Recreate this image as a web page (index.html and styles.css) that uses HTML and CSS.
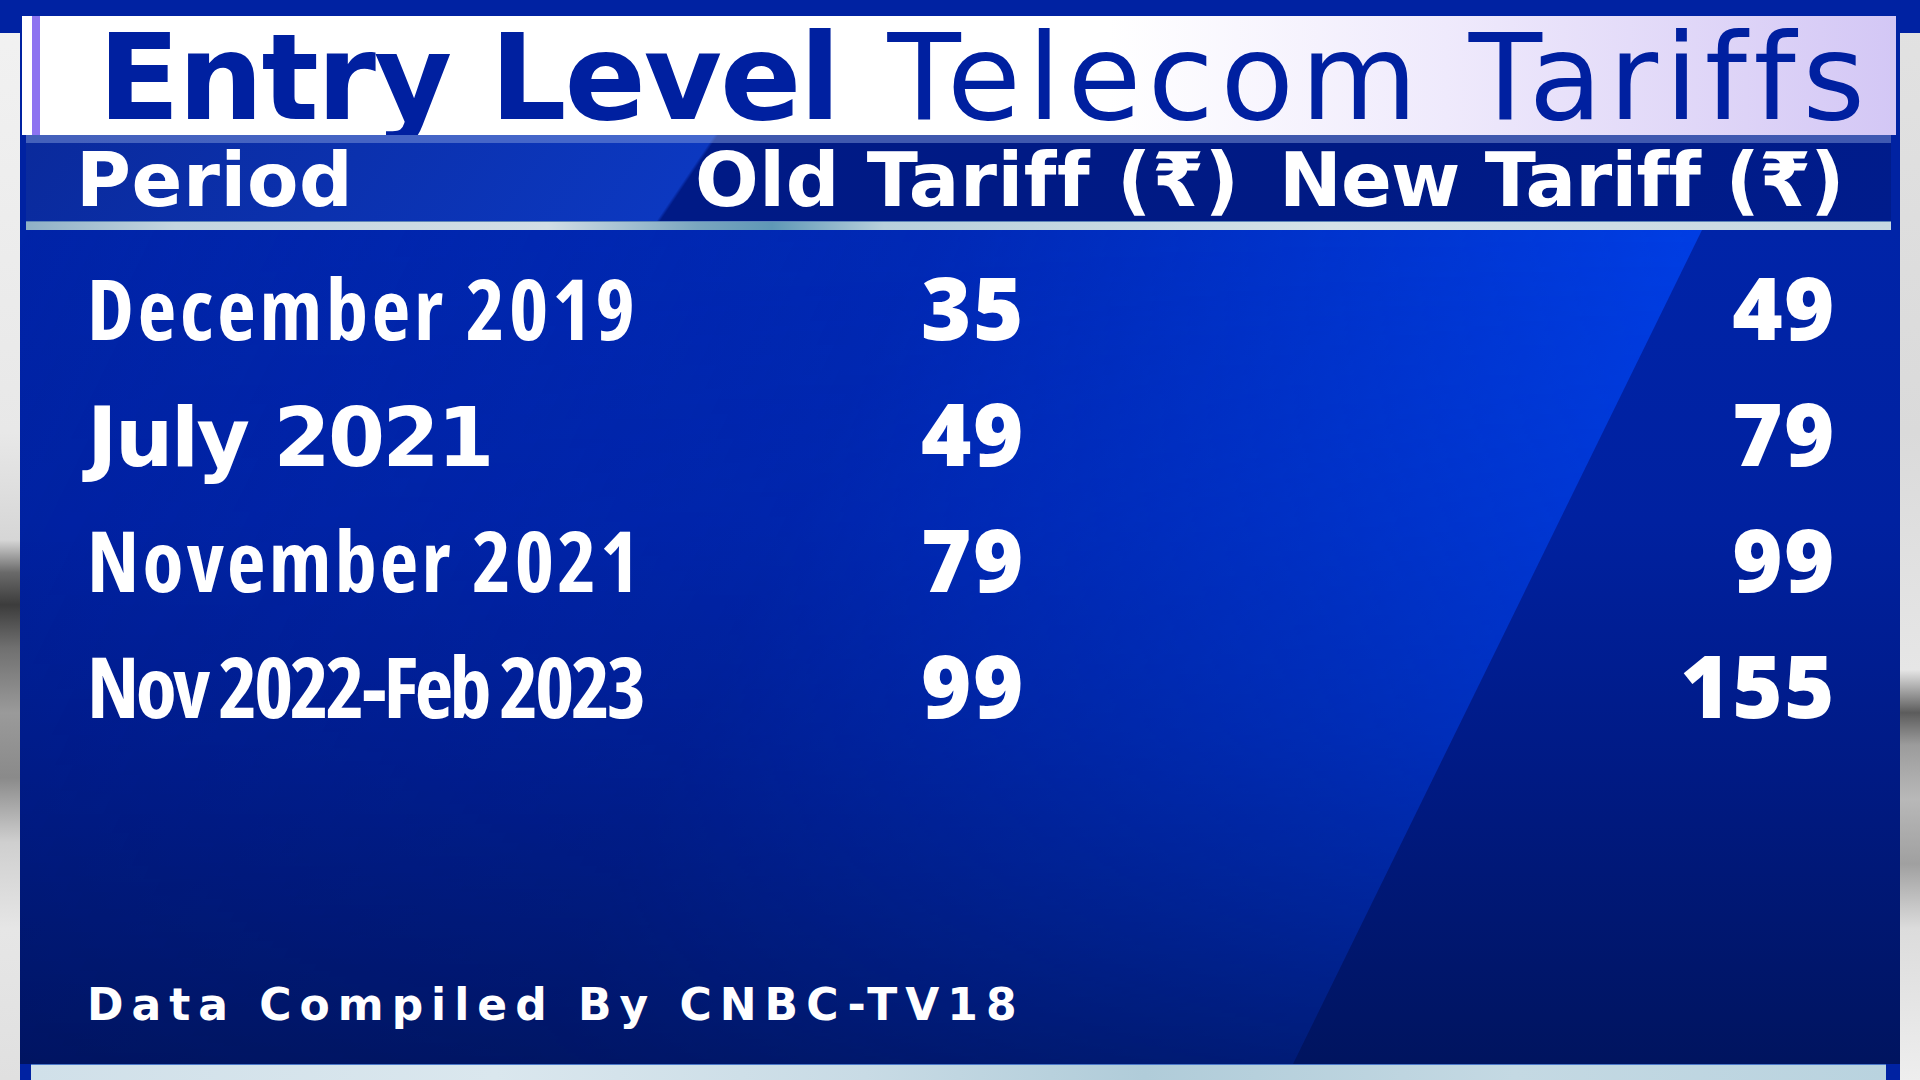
FILE: index.html
```html
<!DOCTYPE html>
<html lang="en">
<head>
<meta charset="utf-8">
<title>Entry Level Telecom Tariffs</title>
<link rel="stylesheet" href="styles.css">
</head>
<body>
  <main class="panel">
    <header class="title-box">
      <h1 class="title"><span class="title-bold">Entry Level</span><span class="title-light">Telecom Tariffs</span></h1>
    </header>
    <div class="thead">
      <div class="thead-bar">
        <span class="th">Period</span>
        <span class="th">Old Tariff (₹)</span>
        <span class="th th-new">New Tariff (₹)</span>
      </div>
      <div class="thead-bevel"></div>
    </div>
    <section class="content">
      <div class="rows">
        <div class="period loose">December 2019</div>
        <div class="num old">35</div>
        <div class="num new">49</div>

        <div class="period wide">July 2021</div>
        <div class="num old">49</div>
        <div class="num new">79</div>

        <div class="period mid">November 2021</div>
        <div class="num old">79</div>
        <div class="num new">99</div>

        <div class="period tight">Nov 2022-Feb 2023</div>
        <div class="num old">99</div>
        <div class="num new">155</div>
      </div>
      <footer class="source">Data Compiled By CNBC-TV18</footer>
    </section>
    <div class="base-strip"></div>
  </main>
</body>
</html>
```
FILE: styles.css
```css
* { box-sizing: border-box; }
html, body { margin: 0; padding: 0; }
body {
  width: 1920px;
  height: 1080px;
  overflow: hidden;
  background:
    linear-gradient(#0022a2, #0022a2) left top / 100% 33px no-repeat,
    linear-gradient(180deg, #f2f2f2 0%, #e8e8e8 40%, #d6d6d6 50%, #6a6a6a 53%, #3c3c3c 56%, #707070 60%, #9a9a9a 66%, #8a8a8a 72%, #cfcfcf 78%, #e6e6e6 86%, #e0e0e0 100%) left top / 20px 100% no-repeat,
    linear-gradient(180deg, #e2e2e2 0%, #dadada 40%, #e6e6e6 62%, #5c5c5c 66%, #9c9c9c 69%, #b8b8b8 74%, #a0a0a0 80%, #dcdcdc 86%, #eeeeee 100%) right top / 20px 100% no-repeat,
    #e0e0e0;
}

.panel {
  width: 1880px;
  height: 1080px;
  margin-left: 20px;
  padding-top: 16px;
  display: flex;
  flex-direction: column;
  background: #0022a2;
}

/* Title */
.title-box {
  height: 119px;
  margin: 0 4px 0 2px;
  padding: 4px 0 0 76px;
  background: linear-gradient(90deg, #ffffff 0%, #ffffff 58%, #efeafc 76%, #ddd3f7 92%, #d3c7f5 100%);
  box-shadow: inset 10px 0 0 #ffffff, inset 18px 0 0 #8c73f0;
}
.title {
  margin: 0;
  display: flex;
  align-items: baseline;
  gap: 49px;
  color: #0020a0;
  white-space: nowrap;
  line-height: 116px;
  height: 116px;
}
.title-bold {
  font: 700 120px/116px "DejaVu Sans", sans-serif;
  letter-spacing: -2px;
}
.title-light {
  font: 400 120px/116px "DejaVu Sans", sans-serif;
  letter-spacing: 6.6px;
}

/* Table header */
.thead { margin: 0 9px 0 6px; }
.thead-bar {
  height: 86px;
  padding: 6px 0 0 50px;
  display: grid;
  grid-template-columns: 619px 584px auto;
  font: 700 75px/79px "DejaVu Sans", sans-serif;
  letter-spacing: 0.6px;
  color: #ffffff;
  white-space: nowrap;
  background: linear-gradient(124deg, #0a2a9c 0%, #0c38c0 35.8%, #001a86 36%, #001a84 70%, #001c8c 100%);
  box-shadow: inset 0 8px 0 rgba(140, 165, 225, 0.45);
}
.th-new { letter-spacing: -0.8px; }
.thead-bevel {
  height: 9px;
  border-top: 1px solid #5f86b8;
  background: linear-gradient(90deg, #8fb0c6 0%, #c4d6e0 8%, #d2dee5 28%, #7aa6bf 36%, #5f98b6 40%, #b8d0dc 46%, #d6e2e8 70%, #c6d8e2 100%);
}

/* Body */
.content {
  flex: 1;
  position: relative;
  display: flex;
  flex-direction: column;
  background: linear-gradient(180deg, #0024a8 0%, #0021a0 35%, #001a84 65%, #00145f 100%);
}
.content::before {
  content: "";
  position: absolute;
  inset: 0;
  background: linear-gradient(116deg, rgba(0, 62, 238, 0) 0%, rgba(0, 62, 238, 0.2) 40%, rgba(0, 68, 242, 0.8) 73.5%);
  clip-path: polygon(0 0, 1682px 0, 1273px 100%, 0 100%);
  -webkit-mask-image: linear-gradient(180deg, #000 0%, rgba(0, 0, 0, 0.6) 60%, rgba(0, 0, 0, 0.2) 100%);
  mask-image: linear-gradient(180deg, #000 0%, rgba(0, 0, 0, 0.6) 60%, rgba(0, 0, 0, 0.2) 100%);
}

.rows {
  position: relative;
  z-index: 1;
  padding: 14px 64px 0 67px;
  display: grid;
  grid-template-columns: 786px 200px 1fr;
  grid-auto-rows: 126px;
  align-items: baseline;
  color: #ffffff;
  font: 700 84px/126px "Open Sans", sans-serif;
  white-space: nowrap;
}
.period { font-stretch: 75%; }
.period.loose { letter-spacing: 3.8px; }
.period.mid { letter-spacing: 3.2px; }
.period.tight { letter-spacing: -3.6px; }
.period.wide {
  font: 700 82px/126px "DejaVu Sans", sans-serif;
  letter-spacing: -2.5px;
}
.num {
  font-size: 86px;
  font-weight: 800;
  letter-spacing: 1.5px;
}
.old { text-align: center; }
.new { text-align: right; }

.source {
  position: relative;
  z-index: 1;
  margin: auto 0 29px 67px;
  font: 700 44px/60px "DejaVu Sans", sans-serif;
  letter-spacing: 8px;
  color: #ffffff;
  white-space: nowrap;
}

.base-strip {
  height: 16px;
  margin: 0 14px 0 11px;
  border-top: 1px solid #4a78c8;
  background: linear-gradient(90deg, #d0e0e9 0%, #dae7ee 25%, #c8dbe5 45%, #b0ccd9 60%, #c4d9e3 80%, #b9d3df 100%);
}
```
